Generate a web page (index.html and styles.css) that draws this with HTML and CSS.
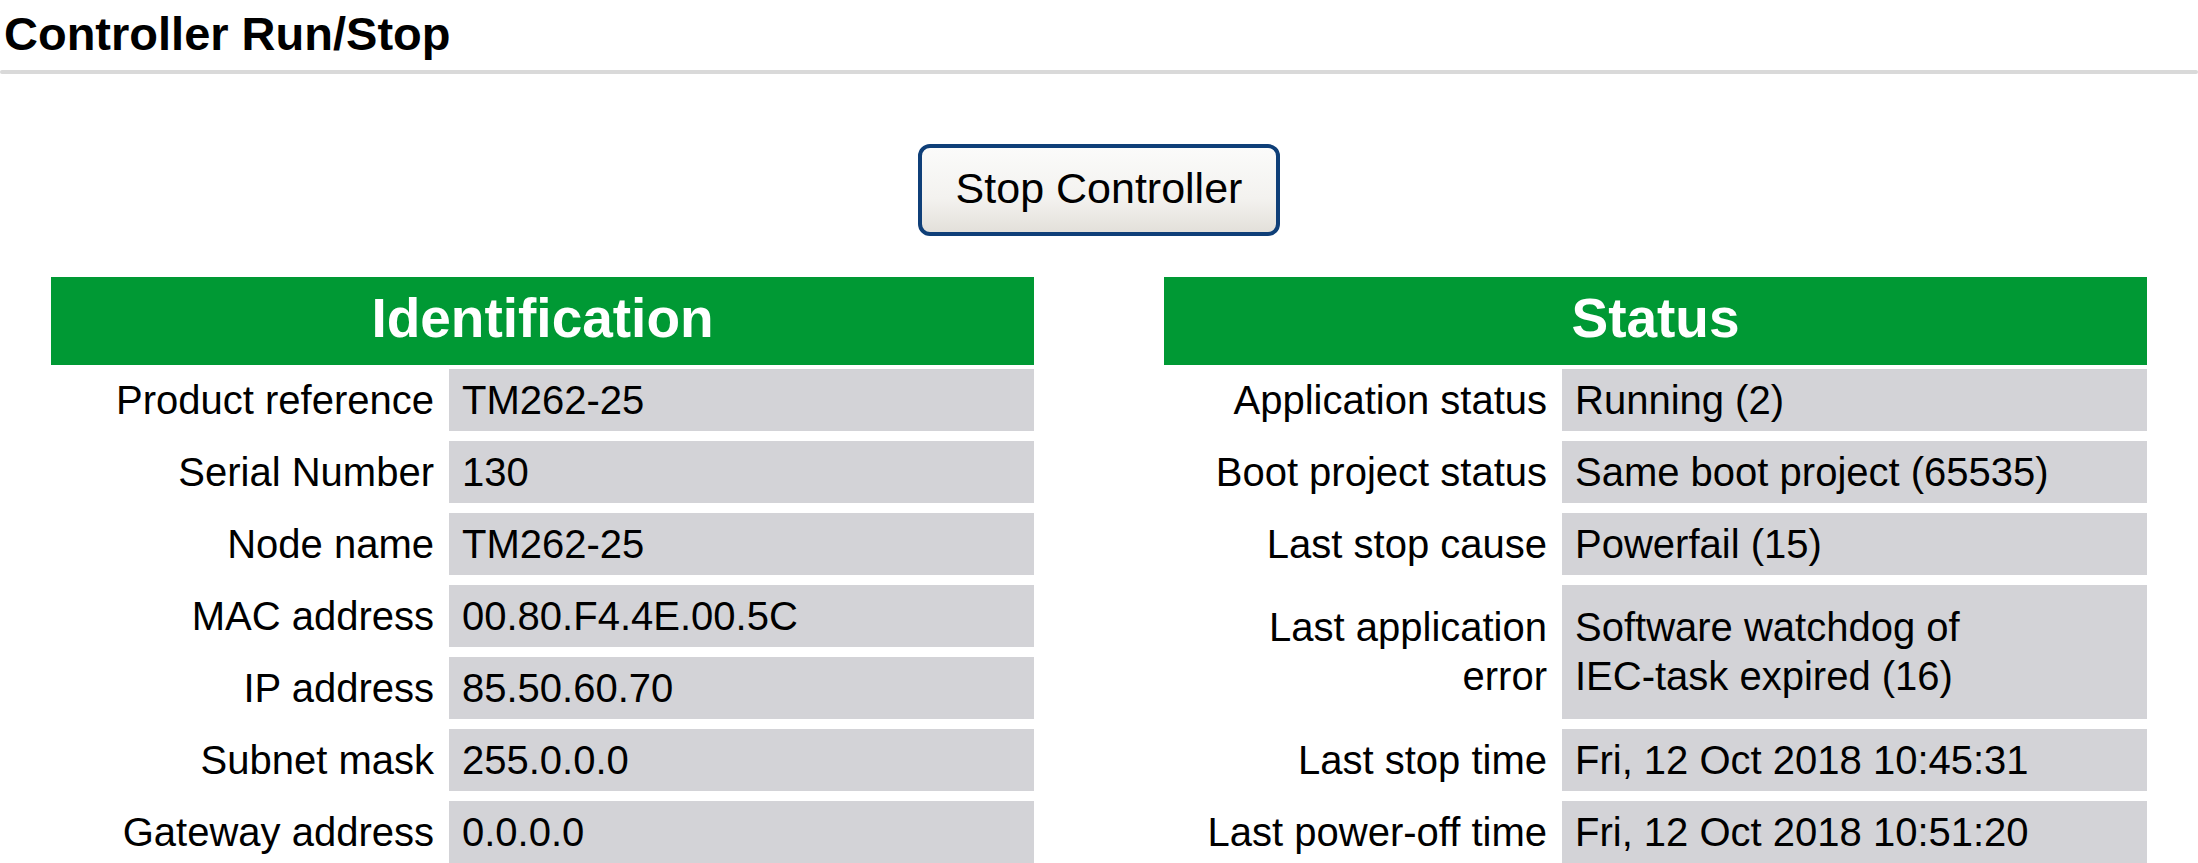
FILE: index.html
```html
<!DOCTYPE html>
<html>
<head>
<meta charset="utf-8">
<title>Controller Run/Stop</title>
<link rel="stylesheet" href="styles.css">
</head>
<body>
<h1 class="page-title">Controller Run/Stop</h1>
<div class="rule"></div>
<div class="actions">
  <button class="btn">Stop Controller</button>
</div>
<div class="panels">
  <section class="panel">
    <div class="panel-head">Identification</div>
    <div class="rows">
      <div class="label">Product reference</div><div class="value">TM262-25</div>
      <div class="label">Serial Number</div><div class="value">130</div>
      <div class="label">Node name</div><div class="value">TM262-25</div>
      <div class="label">MAC address</div><div class="value">00.80.F4.4E.00.5C</div>
      <div class="label">IP address</div><div class="value">85.50.60.70</div>
      <div class="label">Subnet mask</div><div class="value">255.0.0.0</div>
      <div class="label">Gateway address</div><div class="value">0.0.0.0</div>
    </div>
  </section>
  <section class="panel">
    <div class="panel-head">Status</div>
    <div class="rows">
      <div class="label">Application status</div><div class="value">Running (2)</div>
      <div class="label">Boot project status</div><div class="value">Same boot project (65535)</div>
      <div class="label">Last stop cause</div><div class="value">Powerfail (15)</div>
      <div class="label tall">Last application<br>error</div><div class="value tall">Software watchdog of<br>IEC-task expired (16)</div>
      <div class="label">Last stop time</div><div class="value">Fri, 12 Oct 2018 10:45:31</div>
      <div class="label">Last power-off time</div><div class="value">Fri, 12 Oct 2018 10:51:20</div>
    </div>
  </section>
</div>
</body>
</html>
```
FILE: styles.css
```css
html, body {
  margin: 0;
  padding: 0;
  background: #ffffff;
  color: #000000;
  font-family: "Liberation Sans", Arial, Helvetica, sans-serif;
}

.page-title {
  margin: 0;
  padding: 7px 0 0 4px;
  font-size: 47px;
  line-height: 54px;
  font-weight: bold;
}

.rule {
  margin-top: 9px;
  height: 4px;
  border-radius: 2px;
  background: #d9d9d9;
}

.actions {
  display: flex;
  justify-content: center;
  margin-top: 70px;
}

.btn {
  width: 362px;
  height: 92px;
  box-sizing: border-box;
  border: 4px solid #0f3f78;
  border-radius: 12px;
  background: linear-gradient(#fbfbfa 0%, #f3f2ef 60%, #e3e0da 100%);
  font-family: "Liberation Sans", Arial, Helvetica, sans-serif;
  font-size: 43px;
  color: #000;
  padding: 0 0 3px 0;
  line-height: 49px;
}

.panels {
  display: grid;
  grid-template-columns: 1fr 1fr;
  column-gap: 130px;
  padding: 0 51px;
  margin-top: 41px;
}

.panel-head {
  height: 88px;
  box-sizing: border-box;
  padding-bottom: 5px;
  line-height: 83px;
  background: #009934;
  color: #ffffff;
  font-weight: bold;
  font-size: 55px;
  text-align: center;
}

.rows {
  display: grid;
  grid-template-columns: 398px 1fr;
  row-gap: 10px;
  margin-top: 4px;
}

.label,
.value {
  display: flex;
  align-items: center;
  min-height: 62px;
  box-sizing: border-box;
  padding-bottom: 0;
  font-size: 40px;
  line-height: 49px;
}

.label {
  justify-content: flex-end;
  text-align: right;
  padding-right: 15px;
}

.value {
  background: #d3d3d7;
  padding-left: 13px;
}

.tall {
  min-height: 134px;
}
```
